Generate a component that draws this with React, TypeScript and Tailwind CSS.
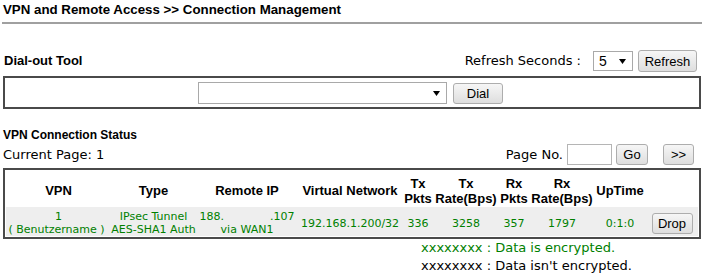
const arial = "font-['Liberation_Sans',Arial,sans-serif]";
const verdana = "font-['DejaVu_Sans',Verdana,sans-serif]";
const btn = `flex items-center justify-center border border-[#adadad] rounded-[3px] bg-linear-to-b from-[#f6f6f6] to-[#dedede] text-[13px] leading-none text-black ${arial}`;

function Arrow() {
  return (
    <svg width="7" height="5" viewBox="0 0 7 5" className="block">
      <polygon points="0,0 7,0 3.5,5" fill="#000" />
    </svg>
  );
}

const cols = "grid grid-cols-[105px_85px_102px_104px_32px_64px_32px_64px_52px_52px]";

export default function App() {
  return (
    <div className={`w-[704px] h-[275px] bg-white overflow-hidden text-black ${verdana}`}>
      {/* Title */}
      <div className={`h-[22px] pl-[3px] pt-[1px] text-[13.3px] font-bold leading-[18px] ${arial}`}>
        VPN and Remote Access &gt;&gt; Connection Management
      </div>
      <div className="mx-[2px] h-[2px] bg-[#a0a0a0]" />

      {/* Dial-out row */}
      <div className="mt-[25px] h-[24px] flex items-center justify-between pl-[4px] pr-[7px]">
        <div className={`text-[13px] font-bold ${arial}`}>Dial-out Tool</div>
        <div className="flex items-center">
          <span className="text-[13px]">Refresh Seconds :</span>
          <div className="ml-[12px] w-[40px] h-[20px] border border-[#a9a9a9] bg-white flex items-center justify-between pl-[5px] pr-[6px]">
            <span className={`text-[14px] ${arial}`}>5</span>
            <Arrow />
          </div>
          <div className={`${btn} ml-[5px] w-[59px] h-[22px]`}>Refresh</div>
        </div>
      </div>

      {/* Dial box */}
      <div className="mt-[3px] mx-[3px] h-[33px] border-2 border-[#4a4a4a] flex justify-center items-start pt-[4px] pr-[3px]">
        <div className="w-[249px] h-[22px] border border-[#a9a9a9] bg-white flex items-center justify-end pr-[6px]">
          <Arrow />
        </div>
        <div className={`${btn} ml-[6px] mt-[1px] w-[50px] h-[21px]`}>Dial</div>
      </div>

      {/* VPN Connection Status */}
      <div className={`mt-[18px] h-[16px] pl-[3px] text-[12px] font-bold leading-[16px] ${arial}`}>
        VPN Connection Status
      </div>
      <div className="mt-[1px] h-[21px] flex items-center justify-between pl-[3px] pr-[10px]">
        <span className="text-[13px]">Current Page: 1</span>
        <div className="flex items-center">
          <span className="text-[13px]">Page No.</span>
          <div className="ml-[4px] w-[45px] h-[21px] border border-[#b5b5b5] bg-white" />
          <div className={`${btn} ml-[4px] w-[32px] h-[21px]`}>Go</div>
          <div className={`${btn} ml-[15px] w-[31px] h-[21px] text-[12px]`}>&gt;&gt;</div>
        </div>
      </div>

      {/* Table */}
      <div className="mt-[3px] mx-[3px] border-2 border-[#4a4a4a] px-[1px] pb-[1px]">
        <div className={`${cols} h-[37px] pt-[4px] items-center text-center text-[13px] font-bold leading-[15px] ${arial}`}>
          <div>VPN</div>
          <div>Type</div>
          <div>Remote IP</div>
          <div>Virtual Network</div>
          <div>Tx<br />Pkts</div>
          <div>Tx<br />Rate(Bps)</div>
          <div>Rx<br />Pkts</div>
          <div>Rx<br />Rate(Bps)</div>
          <div>UpTime</div>
          <div />
        </div>
        <div className={`${cols} h-[29px] pt-[3px] items-center text-center bg-[#eeeeee] text-[11px] leading-[13px] text-[#008000]`}>
          <div>
            <div>1</div>
            <div className="whitespace-pre pr-[4px]">( Benutzername )</div>
          </div>
          <div>
            <div>IPsec Tunnel</div>
            <div>AES-SHA1 Auth</div>
          </div>
          <div className="flex flex-col items-center">
            <div className="flex">
              <span>188.</span>
              <span className="w-[46px]" />
              <span>.107</span>
            </div>
            <div>via WAN1</div>
          </div>
          <div>192.168.1.200/32</div>
          <div>336</div>
          <div>3258</div>
          <div>357</div>
          <div>1797</div>
          <div>0:1:0</div>
          <div className="flex justify-center">
            <div className={`${btn} w-[41px] h-[21px]`}>Drop</div>
          </div>
        </div>
      </div>

      {/* Legend */}
      <div className="pl-[421px] text-[13px] leading-[18px]">
        <div className="text-[#008000]">xxxxxxxx : Data is encrypted.</div>
        <div className="text-black">xxxxxxxx : Data isn&apos;t encrypted.</div>
      </div>
    </div>
  );
}
